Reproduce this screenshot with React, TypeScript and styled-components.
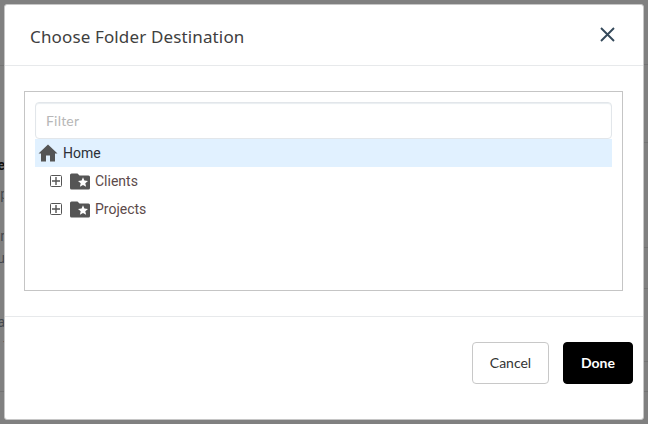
import React from 'react';
import styled, { createGlobalStyle } from 'styled-components';

const GlobalStyle = createGlobalStyle`
  * { box-sizing: border-box; }
  body { margin: 0; overflow: hidden; }
  button, input { margin: 0; font: inherit; }
`;

const Backdrop = styled.div`
  position: relative;
  width: 648px;
  height: 424px;
  padding: 4px;
  background: #808080;
  overflow: hidden;
`;

const PageText = styled.span<{ $top: number; $right?: number; $bold?: boolean }>`
  position: absolute;
  top: ${p => p.$top}px;
  right: ${p => p.$right ?? 643}px;
  font: ${p => (p.$bold ? 700 : 400)} 14px/18px Roboto, sans-serif;
  color: ${p => (p.$bold ? '#111' : '#43484e')};
  white-space: nowrap;
`;

const PageRule = styled.i<{ $top: number; $side: 'left' | 'right' }>`
  position: absolute;
  top: ${p => p.$top}px;
  ${p => p.$side}: 0;
  width: 4px;
  height: 1px;
  background: #737373;
`;

const Dialog = styled.section`
  position: relative;
  display: flex;
  flex-direction: column;
  width: 640px;
  height: 416px;
  background: #fff;
  border: 1px solid #c6c6c6;
  border-radius: 3px;
`;

const Header = styled.header`
  display: flex;
  align-items: center;
  justify-content: space-between;
  height: 61px;
  padding: 3px 28px 0 25px;
  border-bottom: 1px solid #e7e9eb;
`;

const Title = styled.h1`
  margin: 0;
  font: 400 17px/24px 'Noto Sans', sans-serif;
  letter-spacing: 0.14px;
  color: #404040;
  white-space: nowrap;
`;

const CloseButton = styled.button`
  display: flex;
  padding: 0;
  margin-bottom: 4px;
  border: 0;
  background: none;
`;

const Body = styled.div`
  height: 251px;
  padding: 25px 20px 25px 19px;
  border-bottom: 1px solid #e7e9eb;
`;

const TreePanel = styled.div`
  height: 200px;
  padding: 10px;
  border: 1px solid #c5c5c5;
`;

const FilterInput = styled.input`
  display: block;
  width: 100%;
  height: 37px;
  padding: 0 10px 1px;
  border: 1px solid #e2e6ea;
  border-radius: 4px;
  outline: 0;
  box-shadow: inset 0 1px 1px #e9eef1;
  font: 400 14px Lato, sans-serif;
  letter-spacing: 0.2px;
  color: #444;
  &::placeholder { color: #b7b7b7; opacity: 1; }
`;

const TreeRow = styled.div<{ $selected?: boolean }>`
  display: flex;
  align-items: center;
  height: 28px;
  padding-left: ${p => (p.$selected ? 2.5 : 15)}px;
  background: ${p => (p.$selected ? '#e1f1ff' : 'transparent')};
  color: ${p => (p.$selected ? '#2c3037' : '#5c4a4a')};
  font: 400 14px/28px Roboto, sans-serif;
`;

const RowLabel = styled.span<{ $gap: number }>`
  margin-left: ${p => p.$gap}px;
`;

const FolderSlot = styled.span`
  display: flex;
  margin-left: 7.5px;
`;

const Footer = styled.footer`
  display: flex;
  justify-content: flex-end;
  gap: 14px;
  padding: 25px 10px 0 0;
`;

const Action = styled.button<{ $primary?: boolean }>`
  width: ${p => (p.$primary ? 70 : 77)}px;
  height: 42px;
  padding: 0 0 2px;
  border: 1px solid ${p => (p.$primary ? '#000' : '#c8c8c8')};
  border-radius: 4px;
  background: ${p => (p.$primary ? '#000' : '#fff')};
  color: ${p => (p.$primary ? '#fff' : '#333')};
  font: ${p => (p.$primary ? 700 : 400)} 14px Lato, sans-serif;
`;

const CloseIcon = () => (
  <svg width="15" height="15" viewBox="0 0 15 15" fill="none" stroke="#34495a" strokeWidth="1.9">
    <path d="M1 1 14 14M14 1 1 14" />
  </svg>
);

const HomeIcon = () => (
  <svg width="20" height="18" viewBox="0 0 20 18" fill="#555">
    <path d="M10 .5 19.5 9.5h-2.5V17.5h-5v-6H8v6H3V9.5H.5Z" />
  </svg>
);

const ExpandIcon = () => (
  <svg width="12" height="12" viewBox="0 0 12 12" fill="none" stroke="#555">
    <rect x=".5" y=".5" width="11" height="11" rx="1" />
    <path d="M2 6h8M6 2v8" strokeWidth="1.4" />
  </svg>
);

const FolderIcon = () => (
  <svg width="20" height="17" viewBox="0 0 20 17" fill="#555">
    <path d="M1.5.5h6l2 2h9A1.5 1.5 0 0 1 20 4v11a1.5 1.5 0 0 1-1.5 1.5h-17A1.5 1.5 0 0 1 0 15V2A1.5 1.5 0 0 1 1.5.5Z" />
    <path fill="#fff" d="m13 4.3 1.4 3.3 3.6.3-2.7 2.4.8 3.5-3.1-1.9-3.1 1.9.8-3.5L8 7.9l3.6-.3Z" />
  </svg>
);

const folders = ['Clients', 'Projects'];

export default function App() {
  return (
    <>
      <GlobalStyle />
      <Backdrop>
        <PageText $top={156} $bold>e</PageText>
        <PageText $top={185} $right={640}>p</PageText>
        <PageText $top={227}>ar</PageText>
        <PageText $top={249}>u</PageText>
        <PageText $top={313}>a</PageText>
        <PageText $top={332} $right={641}>-</PageText>
        <PageRule $side="left" $top={65} />
        <PageRule $side="left" $top={391} />
        {[64, 142, 247, 288, 361, 391].map(top => (
          <PageRule key={top} $side="right" $top={top} />
        ))}
        <Dialog role="dialog" aria-labelledby="dialog-title">
          <Header>
            <Title id="dialog-title">Choose Folder Destination</Title>
            <CloseButton aria-label="Close"><CloseIcon /></CloseButton>
          </Header>
          <Body>
            <TreePanel>
              <FilterInput placeholder="Filter" />
              <TreeRow $selected>
                <HomeIcon />
                <RowLabel $gap={5.5}>Home</RowLabel>
              </TreeRow>
              {folders.map(name => (
                <TreeRow key={name}>
                  <ExpandIcon />
                  <FolderSlot><FolderIcon /></FolderSlot>
                  <RowLabel $gap={5.5}>{name}</RowLabel>
                </TreeRow>
              ))}
            </TreePanel>
          </Body>
          <Footer>
            <Action>Cancel</Action>
            <Action $primary>Done</Action>
          </Footer>
        </Dialog>
      </Backdrop>
    </>
  );
}
